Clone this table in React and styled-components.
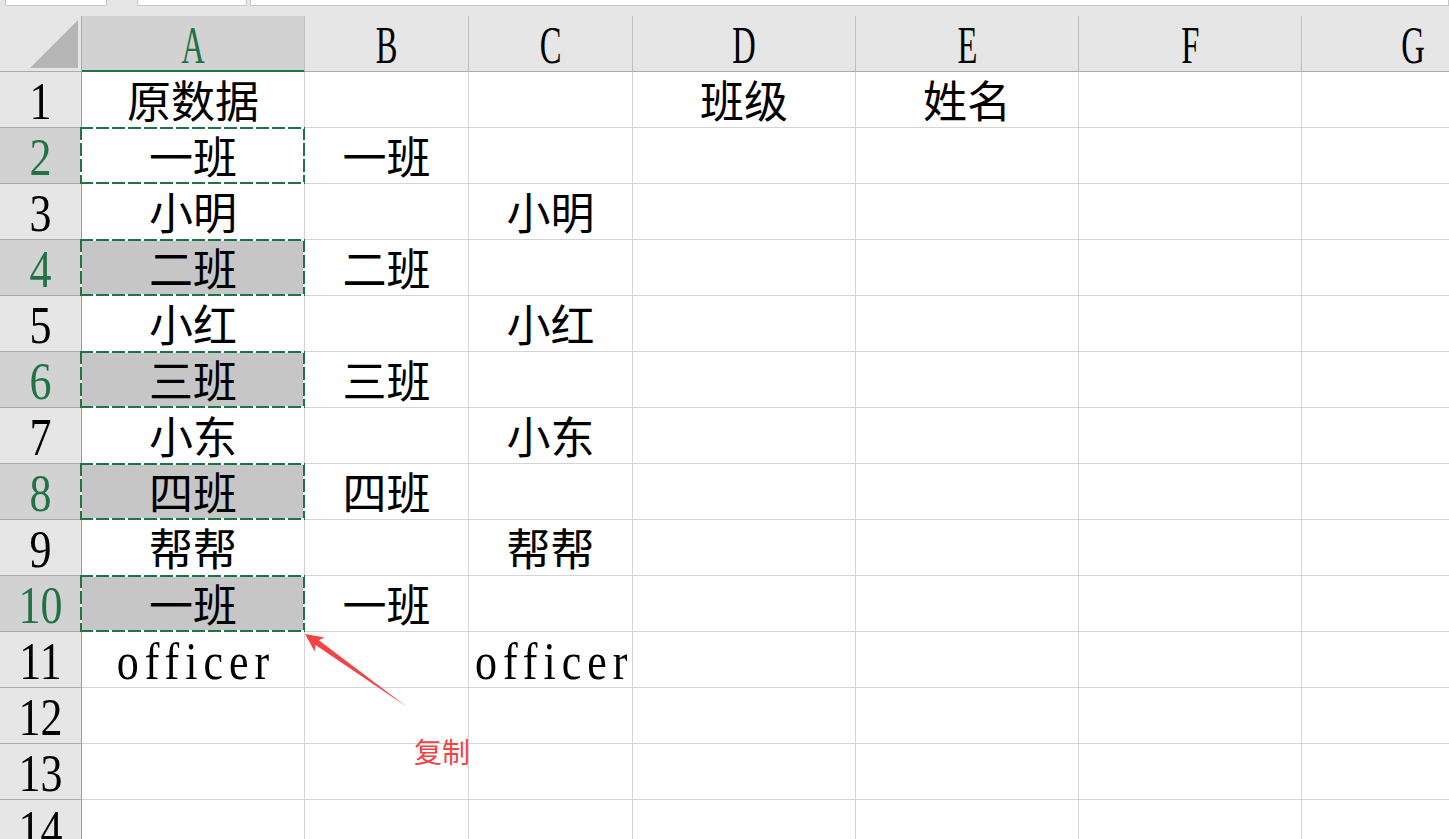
import React from 'react'
import styled, { createGlobalStyle, css } from 'styled-components'

const green = '#217346'

const GlobalStyle = createGlobalStyle`
  html, body {
    margin: 0;
    padding: 0;
    background: #fff;
    overflow: hidden;
  }
`

const Sheet = styled.div`
  position: relative;
  width: 1449px;
  height: 839px;
  overflow: hidden;
  background: #e6e6e6;
  font-family: "Liberation Serif", "Noto Sans CJK SC", serif;
  color: #000;
`

const TopStrip = styled.div`
  display: flex;
  height: 16px;
  background: #e6e6e6;
`

const BarBox = styled.div`
  box-sizing: border-box;
  height: 6px;
  margin-left: ${p => p.$ml}px;
  width: ${p => (p.$w ? `${p.$w}px` : 'auto')};
  flex: ${p => (p.$grow ? 1 : 'none')};
  background: #fff;
  border: 1px solid #c6c6c6;
  border-top: none;
`

const Grid = styled.div`
  display: grid;
  grid-template-columns: 82px 223px 164px 164px 223px 223px 223px 223px;
  grid-auto-rows: 56px;
  background: #fff;
`

const Corner = styled.div`
  box-sizing: border-box;
  display: flex;
  align-items: flex-end;
  justify-content: flex-end;
  padding: 0 3px 3px 0;
  background: #e6e6e6;
  border-right: 1px solid #ababab;
  border-bottom: 1px solid #ababab;
`

const Triangle = styled.div`
  width: 48px;
  height: 48px;
  background: #b6b6b6;
  clip-path: polygon(100% 0, 100% 100%, 0 100%);
`

const ColHead = styled.div`
  box-sizing: border-box;
  text-align: center;
  font-size: 44px;
  line-height: 55px;
  background: ${p => (p.$active ? '#d2d2d2' : '#e6e6e6')};
  color: ${p => (p.$active ? green : '#000')};
  border-right: 1px solid #bdbdbd;
  border-bottom: 1px solid ${p => (p.$active ? green : '#ababab')};
  box-shadow: ${p => (p.$active ? `inset 0 -1px 0 ${green}` : 'none')};
`

const RowHead = styled.div`
  box-sizing: border-box;
  text-align: center;
  font-size: 44px;
  line-height: 55px;
  background: ${p => (p.$active ? '#d2d2d2' : '#e6e6e6')};
  color: ${p => (p.$active ? green : '#000')};
  border-right: 1px solid #9e9e9e;
  border-bottom: 1px solid #ababab;
`

const dash = dir => `repeating-linear-gradient(${dir}, ${green} 0 13px, #fff 13px 16px)`

const Cell = styled.div`
  box-sizing: border-box;
  text-align: center;
  white-space: nowrap;
  font-size: 44px;
  line-height: 55px;
  background: ${p => (p.$fill ? '#c6c6c6' : '#fff')};
  border-right: 1px solid #d4d4d4;
  border-bottom: 1px solid #d4d4d4;

  ${p =>
    p.$marquee &&
    css`
      position: relative;

      &::after {
        content: '';
        position: absolute;
        top: -1px;
        left: -2px;
        right: -1px;
        bottom: -1px;
        z-index: 2;
        pointer-events: none;
        background:
          ${dash('90deg')} top left / 100% 2px no-repeat,
          ${dash('90deg')} bottom left / 100% 2px no-repeat,
          ${dash('180deg')} top left / 2px 100% no-repeat,
          ${dash('180deg')} top right / 2px 100% no-repeat;
      }
    `}
`

// SimSun-like half-width Latin: narrow and tall, sitting on the cell baseline
const Latin = styled.span`
  display: inline-block;
  font-family: "Liberation Serif", serif;
  line-height: 40px;
  letter-spacing: ${p => p.$spacing || 0}px;
  padding-left: ${p => p.$spacing || 0}px;
  transform: translateY(5px) scale(${p => p.$sx || 1}, 1.2);
  transform-origin: 50% 35px;
`

const Cjk = styled.span`
  font-family: "Noto Sans CJK SC", sans-serif;
`

const Annotation = styled.svg`
  position: absolute;
  left: 300px;
  top: 625px;
  overflow: visible;
`

const Label = styled.span`
  position: absolute;
  left: 414px;
  top: 737px;
  font-family: "Noto Sans CJK SC", sans-serif;
  font-size: 28px;
  line-height: 28px;
  color: #f24444;
`

const cols = ['A', 'B', 'C', 'D', 'E', 'F', 'G']

const rows = [
  { A: '原数据', D: '班级', E: '姓名' },
  { A: '一班', B: '一班', marked: true, active: true },
  { A: '小明', C: '小明' },
  { A: '二班', B: '二班', marked: true },
  { A: '小红', C: '小红' },
  { A: '三班', B: '三班', marked: true },
  { A: '小东', C: '小东' },
  { A: '四班', B: '四班', marked: true },
  { A: '帮帮', C: '帮帮' },
  { A: '一班', B: '一班', marked: true },
  { A: 'officer', C: 'officer' },
  {},
  {},
  {},
]

const CellText = ({ text }) => {
  if (!text) return null
  if (/^[\x20-\x7e]+$/.test(text)) return <Latin $spacing={6}>{text}</Latin>
  return <Cjk>{text}</Cjk>
}

const App = () => (
  <Sheet>
    <GlobalStyle />
    <TopStrip>
      <BarBox $ml={5} $w={102} />
      <BarBox $ml={30} $w={110} />
      <BarBox $ml={3} $grow />
    </TopStrip>

    <Grid>
      <Corner>
        <Triangle />
      </Corner>
      {cols.map(c => (
        <ColHead key={c} $active={c === 'A'}>
          <Latin $sx={0.74}>{c}</Latin>
        </ColHead>
      ))}

      {rows.map((row, i) => (
        <React.Fragment key={i}>
          <RowHead $active={row.marked}>
            <Latin>{i + 1}</Latin>
          </RowHead>
          {cols.map(c => {
            const marked = row.marked && c === 'A'
            return (
              <Cell key={c} $marquee={marked} $fill={marked && !row.active}>
                <CellText text={row[c]} />
              </Cell>
            )
          })}
        </React.Fragment>
      ))}
    </Grid>

    <Annotation width="112" height="88" viewBox="0 0 112 88">
      <polygon
        points="5,9 14.7,26.4 15.5,20.1 107,82 18.9,15.3 24.5,12.6"
        fill="#f24444"
      />
    </Annotation>
    <Label>复制</Label>
  </Sheet>
)

export default App
